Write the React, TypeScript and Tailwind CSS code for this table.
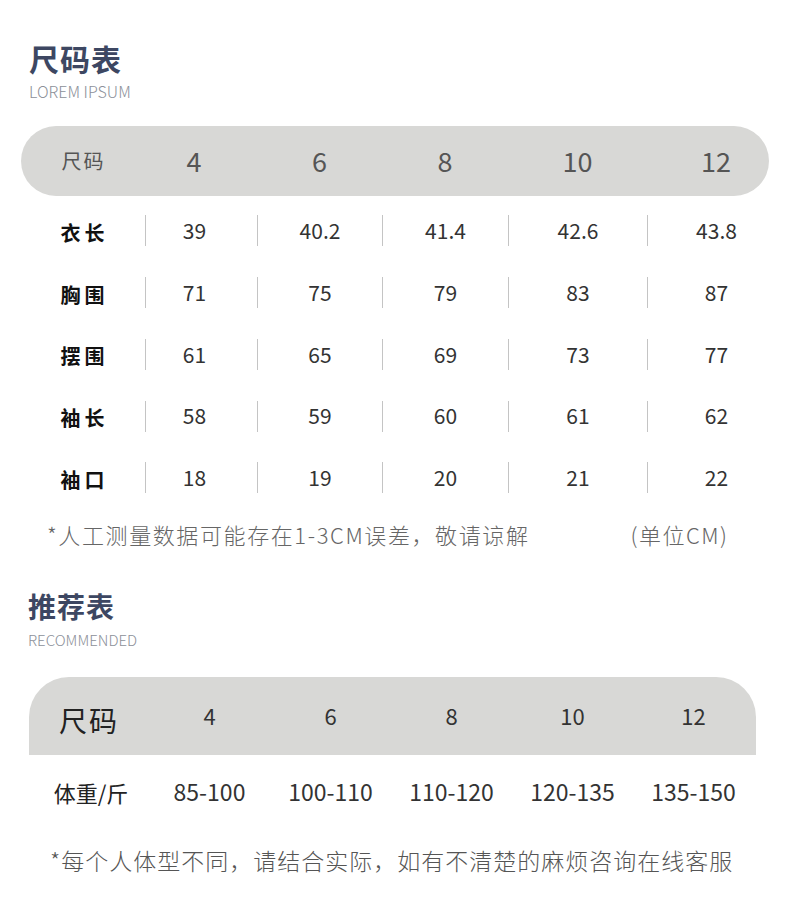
const sizes = ['4', '6', '8', '10', '12'];

const measureRows = [
  { label: '衣长', values: ['39', '40.2', '41.4', '42.6', '43.8'] },
  { label: '胸围', values: ['71', '75', '79', '83', '87'] },
  { label: '摆围', values: ['61', '65', '69', '73', '77'] },
  { label: '袖长', values: ['58', '59', '60', '61', '62'] },
  { label: '袖口', values: ['18', '19', '20', '21', '22'] },
];

const weights = ['85-100', '100-110', '110-120', '120-135', '135-150'];

// 第一张表的列宽：标签列 + 5 个数值列
const cols1 = 'grid-cols-[124px_112px_125px_126px_139px_138px]';
// 第一列数值稍微偏左
const shift1 = ['pr-[14px]', '', '', '', ''];

export default function App() {
  return (
    <div
      className="w-[790px] min-h-[920px] bg-white pb-10 text-[#333]"
      style={{ fontFamily: '"Noto Sans CJK SC", "Noto Sans", sans-serif' }}
    >
      {/* 尺码表 标题 */}
      <div className="pl-[29px] pt-[42px]">
        <h1 className="text-[30px] leading-[32px] font-bold text-[#3d4762] tracking-[1px]">尺码表</h1>
        <p className="mt-[8px] text-[16px] leading-[18px] font-light text-[#8c9099]">LOREM IPSUM</p>
      </div>

      {/* 表头 */}
      <div className="ml-[21px] mt-[26px] w-[748px] h-[70px] rounded-full bg-[#d8d8d6]">
        <div className={`grid ${cols1} h-full items-center text-[#555]`}>
          <div className="text-center text-[20px] tracking-[2px] pl-[1px]">尺码</div>
          {sizes.map((s, i) => (
            <div key={s} className={`text-center text-[27px] ${shift1[i]}`}>
              {s}
            </div>
          ))}
        </div>
      </div>

      {/* 数据行 */}
      <div className="ml-[21px] mt-[4px]">
        {measureRows.map((row) => (
          <div key={row.label} className={`grid ${cols1} h-[61.75px] items-center`}>
            <div className="text-center text-[20px] font-bold tracking-[4px] pl-[3px] text-[#111] pt-[4px]">
              {row.label}
            </div>
            {row.values.map((v, i) => (
              <div key={i} className="flex items-center h-[31px] border-l border-[#c4c4c4]">
                <span className={`flex-1 text-center text-[21px] text-[#333] ${shift1[i]}`}>{v}</span>
              </div>
            ))}
          </div>
        ))}
      </div>

      {/* 备注 */}
      <div className="flex items-center mt-[10px] pl-[47px] text-[#666] font-light text-[22px] tracking-[1.6px] leading-[30px]">
        <span>*人工测量数据可能存在1-3CM误差，敬请谅解</span>
        <span className="ml-[101px] tracking-[1.5px]">(单位CM)</span>
      </div>

      {/* 推荐表 标题 */}
      <div className="pl-[28px] mt-[42px]">
        <h2 className="text-[28px] leading-[30px] font-bold text-[#3d4762] tracking-[1px]">推荐表</h2>
        <p className="mt-[10px] text-[15px] leading-[17px] font-light text-[#8c9099]">RECOMMENDED</p>
      </div>

      {/* 推荐表 表格 */}
      <div className="ml-[29px] mt-[29px] w-[727px]">
        <div className="grid grid-cols-[120px_121px_121px_121px_121px_121px] h-[78px] items-center rounded-t-[40px] bg-[#d8d8d6]">
          <div className="text-center text-[28px] text-[#222] tracking-[2px] pt-[8px]">尺码</div>
          {sizes.map((s) => (
            <div key={s} className="text-center text-[22px] text-[#333]">
              {s}
            </div>
          ))}
        </div>
        <div className="grid grid-cols-[120px_121px_121px_121px_121px_121px] h-[72px] items-center">
          <div className="text-center text-[22px] text-[#222] pl-[4px] pt-[4px]">体重/斤</div>
          {weights.map((w) => (
            <div key={w} className="text-center text-[23px] text-[#333]">
              {w}
            </div>
          ))}
        </div>
      </div>

      {/* 底部备注 */}
      <p className="mt-[18px] pl-[50px] text-[23px] leading-[30px] font-light text-[#555] tracking-[1px]">
        *每个人体型不同，请结合实际，如有不清楚的麻烦咨询在线客服
      </p>
    </div>
  );
}
